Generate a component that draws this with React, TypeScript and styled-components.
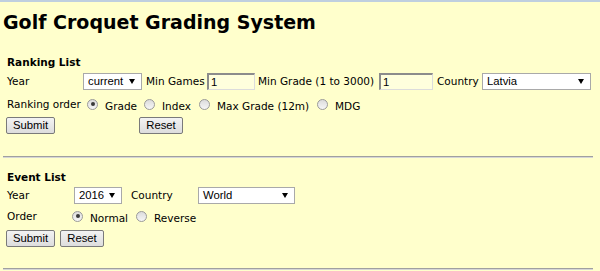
import styled, { createGlobalStyle } from "styled-components";

const GlobalStyle = createGlobalStyle`
  html, body {
    margin: 0;
    padding: 0;
    background: #ffffcc;
  }
  body {
    font-family: "DejaVu Sans", Verdana, sans-serif;
    font-size: 10.5px;
    color: #000000;
  }
`;

const Page = styled.div`
  min-height: 271px;
  box-sizing: border-box;
  border-top: 2px solid #bfcfdf;
  padding: 0 7px 0 3px;
`;

const Title = styled.h1`
  margin: 8px 0 0;
  font-size: 19px;
  line-height: 24px;
  font-weight: bold;
`;

const Section = styled.form<{ $top: number }>`
  margin: 0;
  padding: ${(p) => p.$top}px 0 0 4px;
`;

const Heading = styled.div`
  font-weight: bold;
  line-height: 14px;
`;

const Row = styled.div<{ $h: number }>`
  display: flex;
  align-items: center;
  height: ${(p) => p.$h}px;
  line-height: 14px;
  white-space: nowrap;
`;

const Cell = styled.div<{ $w?: number }>`
  display: flex;
  align-items: center;
  flex: none;
  width: ${(p) => (p.$w ? `${p.$w}px` : "auto")};
`;

const SelectBox = styled.div<{ $w: number }>`
  display: flex;
  align-items: center;
  justify-content: space-between;
  box-sizing: border-box;
  width: ${(p) => p.$w}px;
  height: 17px;
  padding: 0 6px 0 4px;
  background: #ffffff;
  border: 1px solid #a9a9a9;
  font-family: "Liberation Sans", Arial, sans-serif;
  font-size: 11.3px;
`;

const Arrow = styled.span`
  width: 0;
  height: 0;
  border-left: 3px solid transparent;
  border-right: 3px solid transparent;
  border-top: 5px solid #000000;
`;

const TextInput = styled.input<{ $w: number }>`
  box-sizing: border-box;
  width: ${(p) => p.$w}px;
  height: 17px;
  margin: 0;
  padding: 0 2px;
  background: #ffffdd;
  border-style: solid;
  border-width: 2px 1px 1px 2px;
  border-color: #8c8c8c #dcdcdc #dcdcdc #8c8c8c;
  font-family: "Liberation Sans", Arial, sans-serif;
  font-size: 11.3px;
  color: #000000;
  outline: none;
`;

const Option = styled.label<{ $w?: number }>`
  display: flex;
  align-items: center;
  flex: none;
  width: ${(p) => (p.$w ? `${p.$w}px` : "auto")};
`;

const Radio = styled.span<{ $on?: boolean }>`
  position: relative;
  flex: none;
  box-sizing: border-box;
  width: 11px;
  height: 11px;
  margin: 0 7px 0 4px;
  border-radius: 50%;
  border: 1px solid #9a9a9a;
  background: linear-gradient(#dcdcdc, #f6f6f6);

  &::after {
    content: "";
    display: ${(p) => (p.$on ? "block" : "none")};
    position: absolute;
    left: 2.5px;
    top: 2.5px;
    width: 4px;
    height: 4px;
    border-radius: 50%;
    background: #3a3a3a;
  }
`;

const OptionText = styled.span`
  margin-top: 4px;
`;

const Button = styled.button<{ $w: number; $ml?: number }>`
  box-sizing: border-box;
  width: ${(p) => p.$w}px;
  height: 17px;
  margin: 0 0 0 ${(p) => p.$ml ?? 0}px;
  padding: 0;
  border: 1px solid #7a7a7a;
  border-radius: 2px;
  background: linear-gradient(#f3f3f3, #dddddd);
  font-family: "Liberation Sans", Arial, sans-serif;
  font-size: 11.3px;
  color: #000000;
`;

const Rule = styled.hr<{ $top: number }>`
  margin: ${(p) => p.$top}px 0 0;
  height: 0;
  border: 0;
  border-top: 1px solid #a0a0a0;
  border-bottom: 1px solid #d6d6d6;
`;

function Select({ value, width }: { value: string; width: number }) {
  return (
    <SelectBox $w={width}>
      <span>{value}</span>
      <Arrow />
    </SelectBox>
  );
}

function RankingList() {
  return (
    <Section $top={21}>
      <Heading>Ranking List</Heading>
      <Row $h={24}>
        <Cell $w={76}>Year</Cell>
        <Cell $w={63}>
          <Select value="current" width={59} />
        </Cell>
        <Cell $w={61}>Min Games</Cell>
        <Cell $w={51}>
          <TextInput $w={48} defaultValue="1" />
        </Cell>
        <Cell $w={121}>Min Grade (1 to 3000)</Cell>
        <Cell $w={58}>
          <TextInput $w={54} defaultValue="1" />
        </Cell>
        <Cell $w={45}>Country</Cell>
        <Cell>
          <Select value="Latvia" width={109} />
        </Cell>
      </Row>
      <Row $h={22}>
        <Cell $w={76}>Ranking order</Cell>
        <Option $w={57}>
          <Radio $on />
          <OptionText>Grade</OptionText>
        </Option>
        <Option $w={55}>
          <Radio />
          <OptionText>Index</OptionText>
        </Option>
        <Option $w={118}>
          <Radio />
          <OptionText>Max Grade (12m)</OptionText>
        </Option>
        <Option>
          <Radio />
          <OptionText>MDG</OptionText>
        </Option>
      </Row>
      <Row $h={20}>
        <Cell $w={132}>
          <Button $w={49} $ml={-1} type="button">
            Submit
          </Button>
        </Cell>
        <Button $w={44} type="button">
          Reset
        </Button>
      </Row>
    </Section>
  );
}

function EventList() {
  return (
    <Section $top={12}>
      <Heading>Event List</Heading>
      <Row $h={22}>
        <Cell $w={67}>Year</Cell>
        <Cell $w={57}>
          <Select value="2016" width={48} />
        </Cell>
        <Cell $w={67}>Country</Cell>
        <Cell>
          <Select value="World" width={97} />
        </Cell>
      </Row>
      <Row $h={20}>
        <Cell $w={61}>Order</Cell>
        <Option $w={64}>
          <Radio $on />
          <OptionText>Normal</OptionText>
        </Option>
        <Option>
          <Radio />
          <OptionText>Reverse</OptionText>
        </Option>
      </Row>
      <Row $h={24}>
        <Button $w={49} $ml={-1} type="button">
          Submit
        </Button>
        <Button $w={44} $ml={5} type="button">
          Reset
        </Button>
      </Row>
    </Section>
  );
}

export default function App() {
  return (
    <>
      <GlobalStyle />
      <Page>
        <Title>Golf Croquet Grading System</Title>
        <RankingList />
        <Rule $top={21} />
        <EventList />
        <Rule $top={18} />
      </Page>
    </>
  );
}
